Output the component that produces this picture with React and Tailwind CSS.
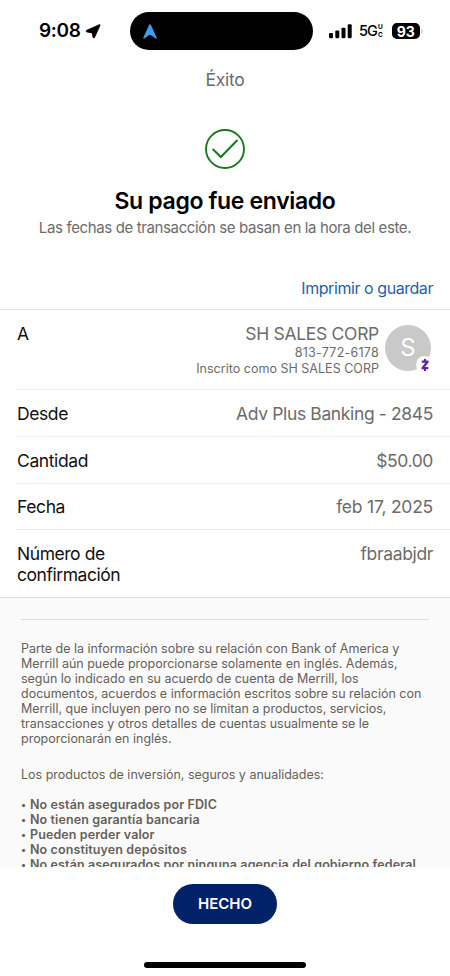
const rows = [
  { label: 'Desde', value: 'Adv Plus Banking - 2845', height: 'h-[47px]', valueClass: 'tracking-[-0.37px]' },
  { label: 'Cantidad', value: '$50.00', height: 'h-[47px]', valueClass: 'tracking-[-0.4px]' },
  { label: 'Fecha', value: 'feb 17, 2025', height: 'h-[46px]', valueClass: 'tracking-[-0.23px]' },
];

const legalLines = [
  'Parte de la información sobre su relación con Bank of America y',
  'Merrill aún puede proporcionarse solamente en inglés. Además,',
  'según lo indicado en su acuerdo de cuenta de Merrill, los',
  'documentos, acuerdos e información escritos sobre su relación con',
  'Merrill, que incluyen pero no se limitan a productos, servicios,',
  'transacciones y otros detalles de cuentas usualmente se le',
  'proporcionarán en inglés.',
];

const disclosures = [
  'No están asegurados por FDIC',
  'No tienen garantía bancaria',
  'Pueden perder valor',
  'No constituyen depósitos',
  'No están asegurados por ninguna agencia del gobierno federal',
];

const LocationIcon = () => (
  <svg className="ml-[4px] h-[15px] w-[16px]" viewBox="0 0 16 15" fill="black" stroke="black" strokeWidth="0.8" strokeLinejoin="round">
    <path d="M14.3 0.7C14.9 0.4 15.3 0.8 15 1.4L9.6 13.4C9.2 14.3 8.2 14.2 8 13.2L7.1 8.9L2 8C1 7.8 0.8 6.7 1.7 6.3Z" />
  </svg>
);

const NavigationIcon = () => (
  <svg className="h-[15px] w-[14px]" viewBox="0 0 14 15" fill="#409cf5">
    <path d="M6.2 0.7C6.5 0 7.5 0 7.8 0.7L13.7 13.7C14 14.5 13.4 14.9 12.7 14.4L7.7 11.1Q7 10.7 6.3 11.1L1.3 14.4C0.6 14.9 0 14.5 0.3 13.7Z" />
  </svg>
);

const SignalIcon = () => (
  <svg className="h-[15px] w-[23px]" viewBox="0 0 23 15" fill="black">
    <rect x="0" y="9" width="4" height="5.2" rx="1.1" />
    <rect x="6.3" y="6.5" width="4" height="7.7" rx="1.1" />
    <rect x="12.5" y="3.7" width="4" height="10.5" rx="1.1" />
    <rect x="18.7" y="0.2" width="4" height="14" rx="1.1" />
  </svg>
);

const SuccessIcon = () => (
  <svg className="h-[40px] w-[40px]" viewBox="0 0 40 40" fill="none" stroke="#177a1b">
    <circle cx="20" cy="20" r="19" strokeWidth="1.9" />
    <path d="M7.7 20L15.8 28L32.5 11" strokeWidth="2" />
  </svg>
);

const ZelleIcon = () => (
  <svg className="h-[12px] w-[8px]" viewBox="0 0 8 12" fill="none" stroke="#5f259f">
    <path d="M0.8 2.7H6.6L1.5 9.2H7.3" strokeWidth="2.3" strokeLinejoin="round" />
    <path d="M4 0V2.5M4 9.5V12" strokeWidth="2" />
  </svg>
);

const StatusBar = () => (
  <div className="flex h-[62px] items-center">
    <div className="flex w-[130px] items-center pl-[39px]">
      <span className="text-[19px] font-semibold tracking-[-0.35px] text-black">9:08</span>
      <LocationIcon />
    </div>
    <div className="flex h-[38px] w-[183px] items-center rounded-full bg-black pl-[13px]">
      <NavigationIcon />
    </div>
    <div className="flex flex-1 items-center pl-[16px]">
      <SignalIcon />
      <span className="ml-[7px] w-[19px] text-[14.5px] font-medium tracking-[-0.9px] text-black">5G</span>
      <span className="flex flex-col text-[6.5px] font-bold leading-[8px] text-black">
        <span>U</span>
        <span>C</span>
      </span>
      <span className="ml-[9px] flex h-[16px] w-[28px] items-center justify-center rounded-[5px] bg-black text-[14px] font-bold tracking-[0.1px] text-white">
        93
      </span>
      <span className="ml-[1px] h-[5px] w-[2px] rounded-r-full bg-gray-300" />
    </div>
  </div>
);

const Recipient = () => (
  <div className="ml-4 flex h-[80px] border-b border-[#ececec] pl-px pr-[19px] pt-[13px]">
    <span className="text-[17.5px] leading-[21px] text-[#111]">A</span>
    <div className="ml-auto flex flex-col items-end text-[#6b6b6b]">
      <span className="text-[17.5px] leading-[21px] tracking-[-0.3px]">SH SALES CORP</span>
      <span className="text-[12.5px] leading-[17px] tracking-[0.25px]">813-772-6178</span>
      <span className="text-[12.5px] leading-[16px] tracking-[0.02px]">Inscrito como SH SALES CORP</span>
    </div>
    <div className="relative ml-[6px] mt-[2px] flex h-[46px] w-[46px] items-center justify-center rounded-full bg-[#c9c9c9] text-[24px] text-white">
      S
      <span className="absolute bottom-[-2px] right-[-2px] flex h-[17px] w-[17px] items-center justify-center rounded-full bg-white">
        <ZelleIcon />
      </span>
    </div>
  </div>
);

const DetailRow = ({ label, value, height, valueClass }) => (
  <div className={`ml-4 flex items-center justify-between border-b border-[#ececec] pl-px pr-[17px] pt-[2px] text-[17.5px] ${height}`}>
    <span className="tracking-[-0.4px] text-[#111]">{label}</span>
    <span className={`text-[#6b6b6b] ${valueClass}`}>{value}</span>
  </div>
);

const Disclosures = () => (
  <div className="h-[269px] overflow-hidden bg-[#fafafa] px-[21px] pt-[21px] text-[12.5px] leading-[15px] tracking-[-0.01px] text-[#665f59]">
    <div className="mb-[21px] border-t border-[#dcdcdc]" />
    {legalLines.map((line) => (
      <p key={line} className="whitespace-nowrap">{line}</p>
    ))}
    <p className="mt-[21px] whitespace-nowrap">Los productos de inversión, seguros y anualidades:</p>
    <ul className="mt-[15px] font-semibold tracking-[0.11px]">
      {disclosures.map((item) => (
        <li key={item} className="flex whitespace-nowrap">
          <span className="w-[9px] text-[10px]">•</span>
          <span>{item}</span>
        </li>
      ))}
    </ul>
  </div>
);

const App = () => (
  <div className="flex h-[976px] w-[450px] flex-col overflow-hidden bg-white font-['Inter',sans-serif]">
    <StatusBar />
    <h1 className="mt-[7px] text-center text-[17.5px] leading-[21px] tracking-[-0.3px] text-[#6b6b6b]">Éxito</h1>
    <div className="mt-[39px] flex flex-col items-center">
      <SuccessIcon />
      <h2 className="mt-[18px] text-[23px] font-semibold leading-[28px] tracking-[-0.35px] text-black">Su pago fue enviado</h2>
      <p className="mt-[3px] whitespace-nowrap text-[15px] leading-[20px] tracking-[-0.37px] text-[#6b6b6b]">
        Las fechas de transacción se basan en la hora del este.
      </p>
    </div>
    <div className="mt-[40px] flex h-[32px] justify-end border-b border-[#e4e4e4] pr-[17px]">
      <a href="#" className="text-[16px] leading-[20px] tracking-[-0.44px] text-[#1f5fa8]">Imprimir o guardar</a>
    </div>
    <Recipient />
    {rows.map((row) => (
      <DetailRow key={row.label} {...row} />
    ))}
    <div className="flex h-[68px] justify-between border-b border-[#dcdcdc] pl-[17px] pr-[17px] pt-[13px] text-[17.5px] leading-[21px]">
      <span className="w-[130px] tracking-[-0.45px] text-[#111]">Número de confirmación</span>
      <span className="tracking-[-0.35px] text-[#6b6b6b]">fbraabjdr</span>
    </div>
    <Disclosures />
    <div className="flex flex-1 flex-col items-center pt-[17px]">
      <button className="h-[40px] w-[104px] rounded-full bg-[#012169] text-[15px] font-semibold text-white">HECHO</button>
      <div className="mt-auto mb-[8px] h-[6px] w-[162px] rounded-full bg-black" />
    </div>
  </div>
);

export default App;
